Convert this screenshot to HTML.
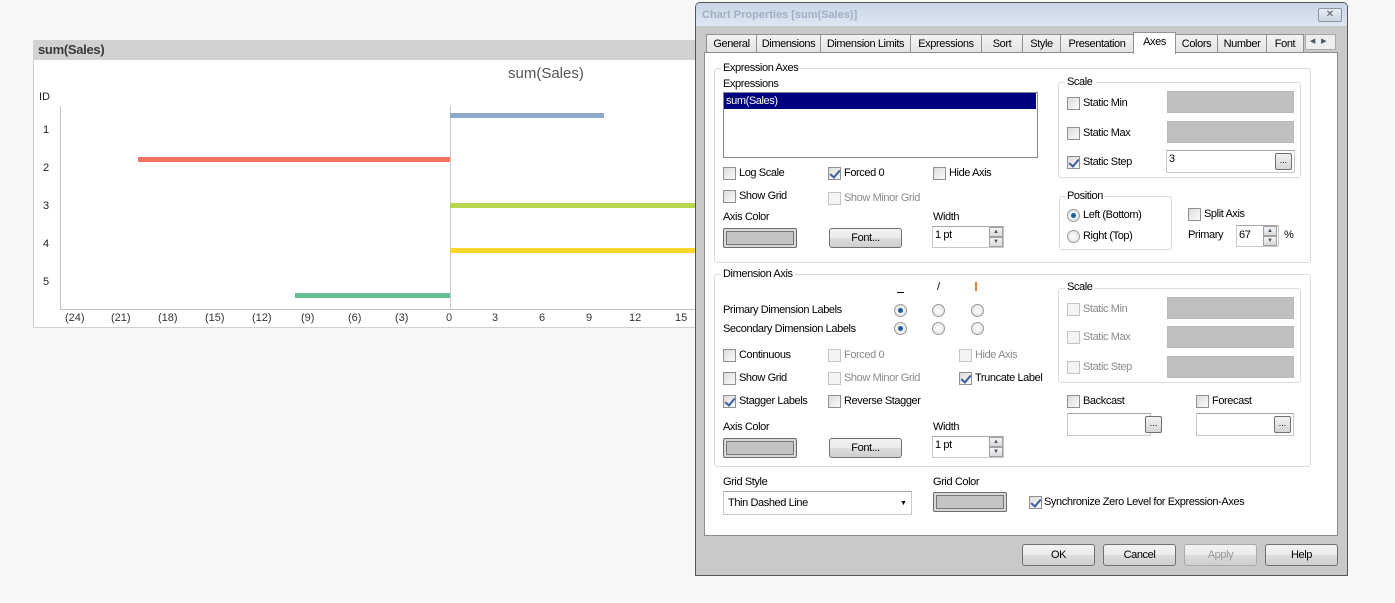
<!DOCTYPE html>
<html><head><meta charset="utf-8"><style>
*{box-sizing:border-box;margin:0;padding:0}
body{width:1395px;height:603px;background:#f7f7f7;position:relative;overflow:hidden;font-family:"Liberation Sans",sans-serif;}
.a{position:absolute}
.t{position:absolute;font-size:11px;letter-spacing:-0.4px;color:#000;white-space:nowrap;line-height:15px}
.d{color:#8a8a8a}
.cb{position:absolute;width:13px;height:13px;border:1px solid #8e8f8f;background:linear-gradient(135deg,#dcdcdc,#fbfbfb)}
.cb.k::after{content:"";position:absolute;left:3px;top:0px;width:4px;height:8px;border:solid #3a5ea0;border-width:0 2px 2px 0;transform:rotate(40deg)}
.cb.x{border-color:#c4c4c4;background:#f4f4f4}
.rb{position:absolute;width:13px;height:13px;border-radius:50%;border:1px solid #9a9a9a;background:radial-gradient(#fff,#ddd)}
.rb.on::after{content:"";position:absolute;left:3px;top:3px;width:5px;height:5px;border-radius:50%;background:#1c5f9c}
.grp{position:absolute;border:1px solid #d5dde3;border-radius:3px}
.lg{position:absolute;background:#fff;padding:0 2px;font-size:11px;letter-spacing:-0.4px;line-height:13px}
.fld{position:absolute;border:1px solid #b8b8b8;background:#c0c0c0}
.fw{position:absolute;border:1px solid #c8c8c8;border-top-color:#a8a8a8;background:#fff}
.btn{position:absolute;border:1px solid #707070;border-radius:3px;background:linear-gradient(#f2f2f2,#ebebeb 50%,#dddddd 50%,#cfcfcf);font-size:11px;letter-spacing:-0.4px;text-align:center}
.sm{position:absolute;width:17px;height:17px;border:1px solid #707070;border-radius:2px;background:linear-gradient(#f2f2f2,#d5d5d5);font-size:9px;text-align:center;line-height:12px}
.spin{position:absolute;width:14px;border:1px solid #a0a0a0;background:linear-gradient(#f4f4f4,#dadada);font-size:6px;text-align:center;color:#456;line-height:8px}
.tab{position:absolute;top:34px;height:19px;border:1px solid #919191;border-bottom:none;background:linear-gradient(#f3f3f3,#e2e2e2);font-size:11px;letter-spacing:-0.4px;text-align:center;line-height:18px}
.cbt{position:absolute;width:74px;height:20px;border:1px solid #6c6c6c;border-radius:2px;background:#d8d8d8;padding:2px}
.cbt div{width:100%;height:100%;border:1px solid #777;background:#c4c4c4}
</style></head><body>

<div class="a" style="left:33px;top:40px;width:670px;height:288px;background:#fff;border:1px solid #d0d0d0"></div>
<div class="a" style="left:33px;top:40px;width:670px;height:20px;background:#d2d2d2"></div>
<div class="a" style="left:38px;top:42px;font-size:13px;font-weight:600;color:#3a3a3a;letter-spacing:-0.3px">sum(Sales)</div>
<div class="a" style="left:508px;top:65px;font-size:15px;color:#555">sum(Sales)</div>
<div class="a" style="left:39px;top:91px;font-size:11px;color:#222">ID</div>
<div class="a" style="left:60px;top:106px;width:1px;height:204px;background:#c0c0c0"></div>
<div class="a" style="left:60px;top:309px;width:640px;height:1px;background:#c0c0c0"></div>
<div class="a" style="left:450px;top:106px;width:1px;height:204px;background:#c8c8c8"></div>
<div class="a" style="left:43px;top:124px;font-size:11px;color:#222">1</div>
<div class="a" style="left:43px;top:162px;font-size:11px;color:#222">2</div>
<div class="a" style="left:43px;top:200px;font-size:11px;color:#222">3</div>
<div class="a" style="left:43px;top:238px;font-size:11px;color:#222">4</div>
<div class="a" style="left:43px;top:276px;font-size:11px;color:#222">5</div>
<div class="a" style="left:450px;top:113px;width:154px;height:5px;background:#8fa9c9"></div>
<div class="a" style="left:138px;top:157px;width:312px;height:5px;background:#f57262"></div>
<div class="a" style="left:450px;top:203px;width:250px;height:5px;background:#b9d651"></div>
<div class="a" style="left:450px;top:248px;width:250px;height:5px;background:#fcd72b"></div>
<div class="a" style="left:295px;top:293px;width:155px;height:5px;background:#66bf91"></div>
<div class="a" style="left:0;top:312px;font-size:11px;color:#333">
<span class="a" style="left:65px">(24)</span><span class="a" style="left:111px">(21)</span><span class="a" style="left:158px">(18)</span><span class="a" style="left:205px">(15)</span><span class="a" style="left:252px">(12)</span><span class="a" style="left:301px">(9)</span><span class="a" style="left:348px">(6)</span><span class="a" style="left:395px">(3)</span><span class="a" style="left:446px">0</span><span class="a" style="left:492px">3</span><span class="a" style="left:539px">6</span><span class="a" style="left:586px">9</span><span class="a" style="left:629px">12</span><span class="a" style="left:675px">15</span></div>

<div class="a" style="left:695px;top:2px;width:653px;height:574px;border:1px solid #555;border-radius:5px 5px 0 0;background:#c9c9c9"></div>
<div class="a" style="left:696px;top:3px;width:651px;height:23px;border-radius:4px 4px 0 0;background:linear-gradient(#c8d6e5,#dde7f1)"></div>
<div class="a" style="left:702px;top:9px;font-size:11px;font-weight:bold;color:#9fb0c2">Chart Properties [sum(Sales)]</div>
<div class="a" style="left:1318px;top:8px;width:24px;height:14px;border:1px solid #8a96a4;border-radius:2px;background:linear-gradient(#e8eef5,#cbd6e2);font-size:10px;text-align:center;line-height:12px;color:#555">✕</div>

<div class="tab" style="left:706px;width:51px">General</div>
<div class="tab" style="left:756px;width:65px">Dimensions</div>
<div class="tab" style="left:820px;width:91px">Dimension Limits</div>
<div class="tab" style="left:910px;width:72px">Expressions</div>
<div class="tab" style="left:981px;width:42px">Sort</div>
<div class="tab" style="left:1022px;width:39px">Style</div>
<div class="tab" style="left:1060px;width:74px">Presentation</div>
<div class="tab" style="left:1175px;width:43px">Colors</div>
<div class="tab" style="left:1217px;width:50px">Number</div>
<div class="tab" style="left:1266px;width:38px">Font</div>
<div class="a" style="left:1305px;top:34px;width:31px;height:16px;border:1px solid #aaa;background:#eee;font-size:7px;color:#456;line-height:14px">&nbsp;&nbsp;◀&nbsp;&nbsp;&nbsp;▶</div>
<div class="a" style="left:704px;top:52px;width:634px;height:484px;background:#fff;border:1px solid #8c8c8c"></div>
<div class="tab" style="left:1133px;top:32px;width:43px;height:22px;background:#fff;line-height:18px">Axes</div>

<div class="grp" style="left:714px;top:68px;width:597px;height:195px"></div>
<div class="lg" style="left:721px;top:62px">Expression Axes</div>
<div class="t" style="left:723px;top:77px">Expressions</div>
<div class="a" style="left:723px;top:92px;width:315px;height:66px;border:1px solid #828790;background:#fff"></div>
<div class="a" style="left:724px;top:93px;width:312px;height:16px;background:#000080"></div>
<div class="t" style="left:726px;top:94px;color:#fff">sum(Sales)</div>

<div class="grp" style="left:1058px;top:82px;width:243px;height:96px"></div>
<div class="lg" style="left:1065px;top:76px">Scale</div>
<div class="cb" style="left:1067px;top:97px"></div><div class="t" style="left:1083px;top:96px">Static Min</div>
<div class="fld" style="left:1167px;top:91px;width:127px;height:22px"></div>
<div class="cb" style="left:1067px;top:127px"></div><div class="t" style="left:1083px;top:126px">Static Max</div>
<div class="fld" style="left:1167px;top:121px;width:127px;height:22px"></div>
<div class="cb k" style="left:1067px;top:156px"></div><div class="t" style="left:1083px;top:155px">Static Step</div>
<div class="fw" style="left:1166px;top:150px;width:129px;height:23px"></div>
<div class="t" style="left:1169px;top:152px">3</div>
<div class="sm" style="left:1275px;top:153px">...</div>

<div class="cb" style="left:723px;top:167px"></div><div class="t" style="left:739px;top:166px">Log Scale</div>
<div class="cb k" style="left:828px;top:167px"></div><div class="t" style="left:844px;top:166px">Forced 0</div>
<div class="cb" style="left:933px;top:167px"></div><div class="t" style="left:949px;top:166px">Hide Axis</div>
<div class="cb" style="left:723px;top:190px"></div><div class="t" style="left:739px;top:189px">Show Grid</div>
<div class="cb x" style="left:828px;top:192px"></div><div class="t d" style="left:844px;top:191px">Show Minor Grid</div>
<div class="t" style="left:723px;top:210px">Axis Color</div>
<div class="cbt" style="left:723px;top:228px"><div></div></div>
<div class="btn" style="left:829px;top:228px;width:73px;height:20px;line-height:18px">Font...</div>
<div class="t" style="left:933px;top:210px">Width</div>
<div class="fw" style="left:932px;top:226px;width:72px;height:22px"></div>
<div class="t" style="left:935px;top:228px">1 pt</div>
<div class="spin" style="left:989px;top:227px;height:10px">▲</div><div class="spin" style="left:989px;top:237px;height:10px">▼</div>

<div class="grp" style="left:1059px;top:196px;width:113px;height:54px"></div>
<div class="lg" style="left:1065px;top:190px">Position</div>
<div class="rb on" style="left:1067px;top:209px"></div><div class="t" style="left:1083px;top:208px">Left (Bottom)</div>
<div class="rb" style="left:1067px;top:230px"></div><div class="t" style="left:1083px;top:229px">Right (Top)</div>
<div class="cb" style="left:1188px;top:208px"></div><div class="t" style="left:1204px;top:207px">Split Axis</div>
<div class="t" style="left:1188px;top:228px">Primary</div>
<div class="fw" style="left:1236px;top:225px;width:43px;height:22px"></div>
<div class="t" style="left:1239px;top:228px">67</div>
<div class="spin" style="left:1263px;top:226px;height:10px">▲</div><div class="spin" style="left:1263px;top:236px;height:10px">▼</div>
<div class="t" style="left:1284px;top:228px">%</div>

<div class="grp" style="left:714px;top:274px;width:597px;height:193px"></div>
<div class="lg" style="left:721px;top:268px">Dimension Axis</div>
<div class="a" style="left:897px;top:292px;width:7px;height:1px;background:#000"></div>
<div class="t" style="left:937px;top:280px">/</div>
<div class="a" style="left:975px;top:282px;width:2px;height:9px;background:#f08030"></div>
<div class="t" style="left:723px;top:303px">Primary Dimension Labels</div>
<div class="t" style="left:723px;top:322px">Secondary Dimension Labels</div>
<div class="rb on" style="left:894px;top:304px"></div><div class="rb" style="left:932px;top:304px"></div><div class="rb" style="left:971px;top:304px"></div>
<div class="rb on" style="left:894px;top:322px"></div><div class="rb" style="left:932px;top:322px"></div><div class="rb" style="left:971px;top:322px"></div>

<div class="grp" style="left:1058px;top:288px;width:243px;height:95px"></div>
<div class="lg" style="left:1065px;top:281px">Scale</div>
<div class="cb x" style="left:1067px;top:303px"></div><div class="t d" style="left:1083px;top:302px">Static Min</div>
<div class="fld" style="left:1167px;top:297px;width:127px;height:22px"></div>
<div class="cb x" style="left:1067px;top:331px"></div><div class="t d" style="left:1083px;top:330px">Static Max</div>
<div class="fld" style="left:1167px;top:326px;width:127px;height:22px"></div>
<div class="cb x" style="left:1067px;top:361px"></div><div class="t d" style="left:1083px;top:360px">Static Step</div>
<div class="fld" style="left:1167px;top:356px;width:127px;height:22px"></div>

<div class="cb" style="left:723px;top:349px"></div><div class="t" style="left:739px;top:348px">Continuous</div>
<div class="cb x" style="left:828px;top:349px"></div><div class="t d" style="left:844px;top:348px">Forced 0</div>
<div class="cb x" style="left:959px;top:349px"></div><div class="t d" style="left:975px;top:348px">Hide Axis</div>
<div class="cb" style="left:723px;top:372px"></div><div class="t" style="left:739px;top:371px">Show Grid</div>
<div class="cb x" style="left:828px;top:372px"></div><div class="t d" style="left:844px;top:371px">Show Minor Grid</div>
<div class="cb k" style="left:959px;top:372px"></div><div class="t" style="left:975px;top:371px">Truncate Label</div>
<div class="cb k" style="left:723px;top:395px"></div><div class="t" style="left:739px;top:394px">Stagger Labels</div>
<div class="cb" style="left:828px;top:395px"></div><div class="t" style="left:844px;top:394px">Reverse Stagger</div>
<div class="cb" style="left:1067px;top:395px"></div><div class="t" style="left:1083px;top:394px">Backcast</div>
<div class="cb" style="left:1196px;top:395px"></div><div class="t" style="left:1212px;top:394px">Forecast</div>
<div class="fw" style="left:1067px;top:413px;width:84px;height:23px"></div><div class="sm" style="left:1145px;top:416px">...</div>
<div class="fw" style="left:1196px;top:413px;width:98px;height:23px"></div><div class="sm" style="left:1274px;top:416px">...</div>
<div class="t" style="left:723px;top:420px">Axis Color</div>
<div class="cbt" style="left:723px;top:438px"><div></div></div>
<div class="btn" style="left:829px;top:438px;width:73px;height:20px;line-height:18px">Font...</div>
<div class="t" style="left:933px;top:420px">Width</div>
<div class="fw" style="left:932px;top:436px;width:72px;height:22px"></div>
<div class="t" style="left:935px;top:438px">1 pt</div>
<div class="spin" style="left:989px;top:437px;height:10px">▲</div><div class="spin" style="left:989px;top:447px;height:10px">▼</div>

<div class="t" style="left:723px;top:475px">Grid Style</div>
<div class="fw" style="left:723px;top:491px;width:189px;height:24px"></div>
<div class="t" style="left:728px;top:496px">Thin Dashed Line</div>
<div class="a" style="left:900px;top:500px;font-size:7px">▼</div>
<div class="t" style="left:933px;top:475px">Grid Color</div>
<div class="cbt" style="left:933px;top:492px"><div></div></div>
<div class="cb k" style="left:1029px;top:496px"></div><div class="t" style="left:1044px;top:495px">Synchronize Zero Level for Expression-Axes</div>

<div class="btn" style="left:1022px;top:544px;width:73px;height:22px;line-height:20px">OK</div>
<div class="btn" style="left:1103px;top:544px;width:73px;height:22px;line-height:20px">Cancel</div>
<div class="btn" style="left:1184px;top:544px;width:73px;height:22px;line-height:20px;color:#999;border-color:#aaa">Apply</div>
<div class="btn" style="left:1265px;top:544px;width:73px;height:22px;line-height:20px">Help</div>
</body></html>
